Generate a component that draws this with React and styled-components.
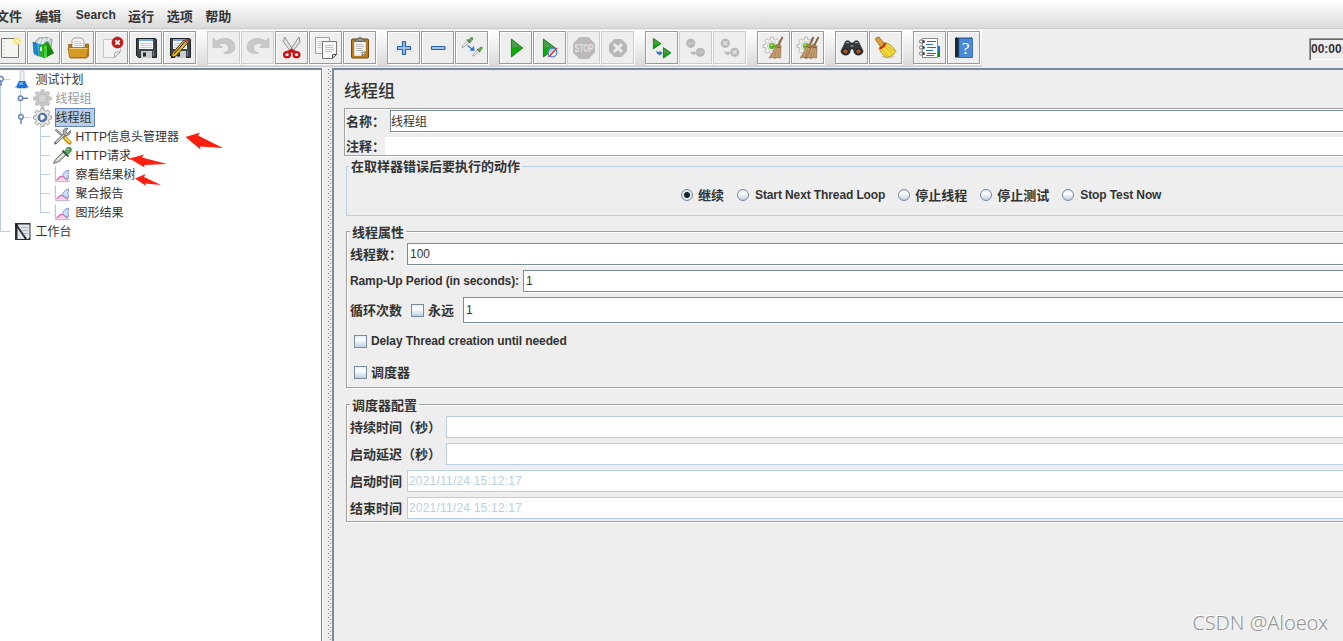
import { useState } from "react";
import styled, { createGlobalStyle, css } from "styled-components";

const c = {
    bg: "#eeeeee",
    text: "#333333",
    dark: "#7a8a99",
    blue: "#b8cfe5",
    handle: "#6382bf",
    etched: "#a0a0a0",
};

//outline of a gear with "n" teeth
function rueda(cx, cy, r1, r2, n = 8) {
    const p = [];
    for (let i = 0; i < n; i++) {
        [[-0.34, r1], [-0.2, r2], [0.2, r2], [0.34, r1]].forEach(([d, r]) => {
            const a = ((i + d) * 2 * Math.PI) / n;
            p.push(`${(cx + r * Math.sin(a)).toFixed(2)} ${(cy - r * Math.cos(a)).toFixed(2)}`);
        });
    }
    return `M${p.join("L")}z`;
}

/* ---------- toolbar drawings, 33px buttons with a 1px border ---------- */

const Broom = ({ x = 0 }) => (
    <g transform={`translate(${x} 0)`}>
        <path d="M25.500 6L20.500 16" stroke="#8a6238" strokeWidth="1.800" />
        <path d="M19 13.500l5 1.500-.5 12-3-.5-2.500 1-2.500-1-3.500.5c3-4 5.500-8.500 7-13.500z" fill="#b48a5c" stroke="#8f6b43" strokeWidth=".6" />
        <path d="M19.500 16l-4 10M21 17l-2 9M22.500 17l-.5 9" stroke="#dbb88a" strokeWidth=".6" />
        <path d="M18.500 15.500l5 1.500" stroke="#7d5426" strokeWidth="1" />
    </g>
);

const GearBody = () => (
    <g>
        <path d={rueda(15, 15, 6.8, 9)} fill="#f1f1f1" stroke="#aaaaaa" strokeWidth=".8" />
        <circle cx="15" cy="15" r="4.500" fill="#e3e6e1" stroke="#bbbbbb" strokeWidth=".7" />
        <circle cx="15" cy="15" r="3" fill="#4fb916" />
        <circle cx="14.500" cy="14" r="1.200" fill="#9aea5c" />
    </g>
);

const Floppy = () => (
    <g>
        <path d="M7.500 7.500h19l1 1v18h-18l-2-2z" fill="#3f464b" stroke="#202427" />
        <path d="M10 8h14v10H10z" fill="#fafcff" />
        <path d="M10 8h14v2H10z" fill="#7ea5d6" />
        <path d="M11 12.500h12M11 14.500h12M11 16.500h12" stroke="#bccfe2" />
        <path d="M12 20h11v7H12z" fill="#c8cccd" />
        <path d="M14 21.500h3v4h-3z" fill="#26292c" />
        <path d="M24.500 20v5" stroke="#758087" />
    </g>
);

const Undo = () => (
    <path
        d="M6 7v9.500h9.500l-3-3c4-2.500 9-.5 9 3.500 0 2-1.500 3.500-5 5 7 2 11.500-1.500 11.500-6C28 8 17 4.500 9.500 10z"
        fill="#c8c8c8"
        stroke="#bebebe"
        strokeWidth=".7"
    />
);

const Tri = ({ x, y, w, h }) => (
    <g>
        <path d={`M${x} ${y}l${w} ${h / 2}l${-w} ${h / 2}z`} fill="#12a80c" stroke="#08700a" strokeWidth=".8" />
        <path d={`M${x + 0.6} ${y + 1.4}l${w * 0.75} ${h * 0.37}l${-w * 0.75} ${h * 0.03}z`} fill="#4c9c4b" />
    </g>
);

const Dropper = ({ x, y, s = 1 }) => (
    <g transform={`translate(${x} ${y}) scale(${s})`}>
        <path d="M0 10L1 8 6 3l1.500 1.500-5.500 5z" fill="#f3f6f1" stroke="#8d978d" strokeWidth=".8" />
        <path d="M5 2l3.500 3.500" stroke="#4b664b" strokeWidth="1.200" />
        <path d="M6.500 2.500L9 0q2-.5 2 1.500L8.500 4.500z" fill="#5fab4a" stroke="#4b8a3b" strokeWidth=".7" />
    </g>
);

const SmallArrow = ({ color }) => <path d="M11.500 19.500l1.500 1.500h1.500v-1.500l3 2.700-3 2.600V23.500H13q-2-1-1.500-4z" fill={color} />;

const icons = {
    nuevo: (
        <g>
            <path d="M8.500 7.500h17v19h-17z" fill="#f4f4f1" stroke="#777872" />
            <path d="M10.500 11h1M10.500 15h1M10.500 19h1M10.500 23h1" stroke="#aaa" />
            <circle cx="24" cy="10" r="3.600" fill="#f7ec84" />
            <path d="M24 6v8M20 10h8" stroke="#f3df46" strokeWidth=".8" />
            <circle cx="24" cy="10" r="1.500" fill="#fffde0" />
        </g>
    ),
    plantillas: (
        <g>
            <path d="M8 11l4-4 8-.5 5 2-1 8-14 2z" fill="#c6d2d5" stroke="#74868d" strokeWidth=".7" />
            <path d="M11 13l3-5M15 13l3-6M20 11l2-4" stroke="#fff" />
            <path d="M6 11l5 2v12l-4-2.500z" fill="#1587c8" stroke="#0b5d94" strokeWidth=".6" />
            <path d="M10 12.500l4 .5v13l-3-1z" fill="#39a6dc" />
            <path d="M12 14l5-1v14l-5-2z" fill="#2cae25" />
            <path d="M16.500 13l4-3 2 3 4.500 9-10.500 5.500z" fill="#1d9518" />
            <path d="M17 14l3 1v12l-3-1z" fill="#47ce35" />
            <path d="M20 15l7 7-7 4z" fill="#158310" />
            <path d="M13 16h2v4h-2z" fill="#d8f8d0" />
        </g>
    ),
    abrir: (
        <g>
            <path d="M11 9l2-2h8l2 3v9H11z" fill="#f8f8f8" stroke="#888" strokeWidth=".8" />
            <path d="M13 10.500h7M13 12.500h8M13 14.500h8" stroke="#bbb" strokeWidth=".8" />
            <path d="M7.500 13.500h3v4h14v-4.500h3v12l-2 2h-16z" fill="#b87a13" stroke="#8f5c08" strokeWidth=".8" />
            <path d="M7 16.500h20.500l-2 10h-17z" fill="#d69a27" stroke="#a56f10" strokeWidth=".8" />
            <path d="M8.500 17.500h17.500" stroke="#f4cc75" />
        </g>
    ),
    cerrar: (
        <g>
            <path d="M8.500 8.500h17v12l-6 6h-11z" fill="#f4f4f4" stroke="#c8c8c8" />
            <path d="M25.500 20.500l-6 6 .5-5z" fill="#fff" stroke="#8c8c8c" strokeWidth=".8" />
            <circle cx="22.500" cy="11.500" r="5.500" fill="#c91818" stroke="#8f0808" strokeWidth=".6" />
            <path d="M20.300 9.300l4.400 4.400m0-4.400l-4.400 4.400" stroke="#fff" strokeWidth="1.900" />
        </g>
    ),
    guardar: <Floppy />,
    guardarComo: (
        <g>
            <Floppy />
            <path d="M8 27l1.500-5L21 9l3.500 3L13 25z" fill="#e9b825" stroke="#37300f" strokeWidth=".9" />
            <path d="M11 23L22 10.500" stroke="#201c10" />
            <path d="M21 9l1.500-1.500L26 10.500 24.500 12z" fill="#d1443a" />
            <path d="M8 27l.8-2.500 1.700 1.500z" fill="#111" />
        </g>
    ),
    deshacer: <Undo />,
    rehacer: (
        <g transform="translate(34 0) scale(-1 1)">
            <Undo />
        </g>
    ),
    cortar: (
        <g>
            <path d="M9.500 6l9.500 14-2.500 1.500L8.500 11zM24 6l-9.500 14 2.500 1.500L25 11z" fill="#e3e4e1" stroke="#858782" strokeWidth=".9" />
            <path d="M14.500 19l2-1.500 2 1.500 3 1-3 2.500-2-1.500-2 1.500-3-2.500z" fill="#c80f0f" />
            <ellipse cx="12" cy="23.700" rx="2.900" ry="2.500" fill="#eee" stroke="#cb1111" strokeWidth="2.300" />
            <ellipse cx="21.500" cy="23.700" rx="2.900" ry="2.500" fill="#eee" stroke="#cb1111" strokeWidth="2.300" />
        </g>
    ),
    copiar: (
        <g>
            <path d="M6.500 6.500h14v16h-14z" fill="#f5f5f5" stroke="#999" strokeWidth=".9" />
            <path d="M9 10.500h9M9 12.500h9M9 14.500h5M9 16.500h5" stroke="#c9c9c9" />
            <path d="M13.500 10.500h14v13l-4 4h-10z" fill="#f9f9f9" stroke="#777" />
            <path d="M16 14.500h9M16 16.500h8M16 18.500h9M16 20.500h7" stroke="#c2c2c2" />
            <path d="M27.500 23.500l-4 4v-4z" fill="#ddd" stroke="#555" />
        </g>
    ),
    pegar: (
        <g>
            <rect x="8.500" y="8" width="17" height="19" rx="1" fill="#b87916" stroke="#76480a" />
            <path d="M11 10h12v12l-3 3h-9z" fill="#f6f6f6" stroke="#ad8a4a" strokeWidth=".5" />
            <path d="M13 13.500h7M13 15.500h8M13 17.500h6M13 19.500h7" stroke="#b9b9b9" />
            <path d="M23 21l-4 4v-4z" fill="#ddd" stroke="#666" strokeWidth=".8" />
            <path d="M11.500 10.500c0-2 2-2 3-2.500.5-2 4.500-2 5 0 1 .5 3 .5 3 2.500z" fill="#8d908a" stroke="#50534d" strokeWidth=".8" />
        </g>
    ),
    mas: (
        <path
            d="M15.500 10.500h3v5h5v3h-5v5h-3v-5h-5v-3h5z"
            fill="#9ec3ea"
            stroke="#2b64a8"
            strokeWidth="1.200"
            strokeLinejoin="round"
        />
    ),
    menos: <rect x="10.500" y="15.500" width="13.500" height="3" rx=".5" fill="#9ec3ea" stroke="#2b64a8" strokeWidth="1.200" />,
    alternar: (
        <g>
            <Dropper x={7} y={6.5} />
            <Dropper x={17.5} y={16} s={0.9} />
            <path d="M12.500 14.500l5 4" stroke="#2d7be0" strokeWidth="1.300" />
            <path d="M19 15l.5 5-5-.5z" fill="#2d7be0" />
        </g>
    ),
    iniciar: <Tri x={12.4} y={8} w={11.4} h={18} />,
    iniciarSinPausa: (
        <g>
            <Tri x={10.4} y={8} w={12} h={18} />
            <circle cx="19.500" cy="21.500" r="4.400" fill="#eee" fillOpacity=".7" stroke="#4d86cf" strokeWidth="1.200" />
            <path d="M15.500 26l8.500-9" stroke="#d92727" strokeWidth="1.300" />
        </g>
    ),
    detener: (
        <g>
            <path d="M12.500 6h9l6.500 6.500v9L21.500 28h-9L6 21.500v-9z" fill="#bababa" />
            <text x="17" y="20.500" textAnchor="middle" textLength="19" lengthAdjust="spacingAndGlyphs" fontSize="10" fontWeight="700" fill="#e2e2e2">
                STOP
            </text>
        </g>
    ),
    apagar: (
        <g>
            <path d="M13.500 8h7l5.500 5.500v7L20.500 26h-7L8 20.500v-7z" fill="#b8b8b8" />
            <path d="M13 13l8 8m0-8l-8 8" stroke="#ececec" strokeWidth="2.800" />
        </g>
    ),
    remotoIniciar: (
        <g>
            <Tri x={8.4} y={7.4} w={7.5} h={10.5} />
            <Tri x={18.4} y={16.6} w={7.5} h={10.5} />
            <SmallArrow color="#3d6fb5" />
        </g>
    ),
    remotoDetener: (
        <g>
            <circle cx="11.700" cy="12.300" r="4.600" fill="#b8b8b8" />
            <path d="M8.500 12.300h6.500" stroke="#c6c6c6" strokeWidth="2" />
            <circle cx="21.300" cy="21.300" r="4.600" fill="#b8b8b8" />
            <path d="M18 21.300h6.500" stroke="#c6c6c6" strokeWidth="2" />
            <SmallArrow color="#bcbcbc" />
        </g>
    ),
    remotoApagar: (
        <g>
            <circle cx="12.300" cy="12.300" r="4.600" fill="#b8b8b8" />
            <path d="M10.300 10.300l4 4m0-4l-4 4" stroke="#e4e4e4" strokeWidth="1.300" />
            <circle cx="21.700" cy="21.300" r="4.600" fill="#b8b8b8" />
            <path d="M19.700 19.300l4 4m0-4l-4 4" stroke="#e4e4e4" strokeWidth="1.300" />
            <SmallArrow color="#bcbcbc" />
        </g>
    ),
    limpiar: (
        <g>
            <GearBody />
            <Broom />
        </g>
    ),
    limpiarTodo: (
        <g>
            <GearBody />
            <Broom x={-3} />
            <Broom x={2} />
        </g>
    ),
    buscar: (
        <g>
            <path d="M10 12c0-3 5-3 5.500 0h3c.5-3 5.500-3 5.500 0l4 8c0 5-8 5.500-9 1l-.5-3h-3L15 21c-1 4.500-9 4-9-1z" fill="#34383a" stroke="#17191a" strokeWidth=".7" />
            <path d="M11 12q2-1 3 0M20 12q2-1 3 0" stroke="#a9b0b3" strokeWidth="1.200" />
            <circle cx="10.500" cy="20.500" r="2.800" fill="#a5552e" stroke="#111" />
            <circle cx="23.500" cy="20.500" r="2.800" fill="#a5552e" stroke="#111" />
            <path d="M15.500 15h3" stroke="#889094" strokeWidth="1.500" />
        </g>
    ),
    limpiarBusqueda: (
        <g>
            <ellipse cx="19" cy="26" rx="7" ry="1.500" fill="#cfcfcf" />
            <path d="M6.500 8.500q0-2.500 3.500-2.500l6 7.500-4 3z" fill="#dda13c" stroke="#92641a" strokeWidth=".8" />
            <path d="M16 11.500q7 2 11 9-3 5-9 6-4-1-8-9z" fill="#f3db3b" stroke="#a98a0b" strokeWidth=".8" />
            <path d="M15 15l8.500 8M12.500 17.500l6.500 8M17 14l8 6" stroke="#c9a916" strokeWidth=".8" />
            <path d="M10.500 17.500q4-1 6-5.500" stroke="#d02a24" strokeWidth="2.200" />
        </g>
    ),
    funciones: (
        <g>
            <path d="M9.500 7.500h15v19h-15z" fill="#fff" stroke="#888" />
            <path d="M26 15v6" stroke="#1575d8" strokeWidth="2" />
            <path d="M26 21v5" stroke="#128a1b" strokeWidth="2" />
            <path d="M14 10.500h9M14 16.500h9M14 22.500h9" stroke="#2a69d0" />
            <path d="M13 13.500h7M13 19.500h7M13 24.500h8" stroke="#2a69d0" />
            {[10.5, 16.5, 22.5].map((y) => (
                <g key={y}>
                    <circle cx="10.500" cy={y} r="1.500" fill="#444" />
                    <circle cx="8" cy={y} r="1.600" fill="#fff" stroke="#666" strokeWidth=".9" />
                </g>
            ))}
        </g>
    ),
    ayuda: (
        <g>
            <path d="M8 7l2-1h15v20.500H8z" fill="#1c2836" />
            <path d="M12 7.500h13.500v19H12z" fill="#4a89d6" stroke="#2864ac" strokeWidth=".8" />
            <path d="M10 6.500h14.500" stroke="#9aa4b2" />
            <text x="18.700" y="22.500" textAnchor="middle" fontSize="17" fill="#fff" fontFamily="Liberation Serif, serif">
                ?
            </text>
        </g>
    ),
};

const grupos = [
    ["nuevo", "plantillas", "abrir", "cerrar", "guardar", "guardarComo"],
    ["deshacer", "rehacer", "cortar", "copiar", "pegar"],
    ["mas", "menos", "alternar"],
    ["iniciar", "iniciarSinPausa", "detener", "apagar"],
    ["remotoIniciar", "remotoDetener", "remotoApagar"],
    ["limpiar", "limpiarTodo"],
    ["buscar", "limpiarBusqueda"],
    ["funciones", "ayuda"],
];

const desactivados = ["deshacer", "rehacer", "detener", "apagar", "remotoDetener", "remotoApagar"];

/* ---------- tree drawings ---------- */

const Gear = ({ off }) => (
    <svg width="20" height="19" viewBox="0 0 20 19">
        <path d={rueda(9.5, 9.5, 6.9, 9.2)} fill={off ? "#c8c8c8" : "#e6e6e6"} stroke={off ? "#c0c0c0" : "#8f8f8f"} strokeWidth=".8" />
        <circle cx="9.500" cy="9.500" r="4.300" fill={off ? "#d3d3d3" : "#5377ab"} stroke={off ? "#bababa" : "#48648f"} strokeWidth="1" />
        {!off && <path d="M7.500 7q3.500-1 4.500 2.500-1.500 2.500-4.500 2.500z" fill="#fff" />}
    </svg>
);

const Flask = () => (
    <svg width="16" height="19" viewBox="0 0 16 19">
        <ellipse cx="8" cy="17" rx="7.500" ry="1.700" fill="#c3c9d0" />
        <path d="M6 1h4v8l3.500 7.500q0 1.500-2 1.500h-7q-2 0-2-1.500L6 9z" fill="#e9eff5" stroke="#bcc6d0" strokeWidth=".8" />
        <path d="M5 11h6l2.500 5.500q0 1.500-2 1.500h-7q-2 0-2-1.500z" fill="#1c6fe0" />
        <path d="M5.500 12h3l1 3H5z" fill="#69aaf7" />
    </svg>
);

const Tools = () => (
    <svg width="20" height="19" viewBox="0 0 20 19">
        <path d="M2.500 2.500L11 10" stroke="#666" strokeWidth="2.200" />
        <path d="M2.500 2.500L11 10" stroke="#ddd" strokeWidth=".8" />
        <path d="M12 11l4.500 4.500" stroke="#c08c12" strokeWidth="4.200" strokeLinecap="round" />
        <path d="M12 10.500l5 5" stroke="#f7d254" strokeWidth="2.200" />
        <path d="M2.500 16L13 6" stroke="#666" strokeWidth="2.800" strokeLinecap="round" />
        <path d="M3 15.500L13 6" stroke="#d9d9d9" strokeWidth="1.200" />
        <path d="M17.500 3.500l-3 3-2-2 2.500-3q-4-1-5 3 1 5 4.500 4 3.500-1 3-5z" fill="#b3b3b3" stroke="#5b5b5b" strokeWidth=".8" />
    </svg>
);

const Pipette = () => (
    <svg width="20" height="19" viewBox="0 0 20 19">
        <path d="M.5 17.500l2.500-4.500 7-7 3 3-7 6.500z" fill="#b5bcb4" stroke="#6b716a" strokeWidth=".9" />
        <path d="M3.500 15l7.500-7" stroke="#f7f7f7" strokeWidth="1.200" />
        <path d="M9.500 4.500l6 6" stroke="#3b5540" strokeWidth="2" />
        <path d="M11.500 5.500l3-4q3.500-1 4 2 0 2.500-4 5z" fill="#51a85d" stroke="#357a42" strokeWidth=".9" />
        <path d="M13.500 4.500l2-1.500" stroke="#a3d6a5" />
    </svg>
);

const Chart = () => (
    <svg width="20" height="19" viewBox="0 0 20 19">
        <path d="M2.500 1.500v15H17" stroke="#c4bccf" fill="none" />
        <path d="M1 4h2M1 8h2M1 12h2M6 18v-2M10 18v-2M14 18v-2" stroke="#c9c3d4" strokeWidth=".8" />
        <path d="M3 16l5-6 7 6z" fill="#f8d4e6" />
        <path d="M3.500 15l4-3.500 3 .5 4.500 3.500" stroke="#dd64ab" strokeWidth="1.200" fill="none" />
        <path d="M9.500 10q2-4.500 6-5-1 5 0 8.500-4 1-6-3.500z" fill="#d4e0fb" stroke="#8098dc" />
    </svg>
);

const Clipboard = () => (
    <svg width="18" height="19" viewBox="0 0 18 19">
        <path d="M1 1h15.500v17H1z" fill="#2c2f33" />
        <path d="M3.500 2.500h12v13l-1.500 1.500H3.500z" fill="#dfe3ea" />
        <path d="M7 5.500h7M8 8.500h6M10 11.500h4" stroke="#a7b4ca" />
        <path d="M2 2.500L12 17" stroke="#111" strokeWidth="1.900" />
        <path d="M3 4l8 11.500" stroke="#888" strokeWidth=".5" />
    </svg>
);

const nodos = [
    { texto: "测试计划", nivel: 0, icono: <Flask />, guia: "raiz" },
    { texto: "线程组", nivel: 1, icono: <Gear off />, guia: "cerrado", off: true },
    { texto: "线程组", nivel: 1, icono: <Gear />, guia: "abierto" },
    { texto: "HTTP信息头管理器", nivel: 2, icono: <Tools />, guia: "hoja" },
    { texto: "HTTP请求", nivel: 2, icono: <Pipette />, guia: "hoja" },
    { texto: "察看结果树", nivel: 2, icono: <Chart />, guia: "hoja" },
    { texto: "聚合报告", nivel: 2, icono: <Chart />, guia: "hoja" },
    { texto: "图形结果", nivel: 2, icono: <Chart />, guia: "ultima" },
    { texto: "工作台", nivel: 0, icono: <Clipboard />, guia: "fin" },
];

const anchoGuia = [14, 33, 53];

function Guia({ tipo, nivel }) {
    const w = anchoGuia[nivel];
    return (
        <svg width={w} height="19" viewBox={`0 0 ${w} 19`} fill="none" stroke={c.blue} shapeRendering="crispEdges">
            <path d={tipo === "raiz" ? "M.5 9v10M0 9.500h10" : tipo === "fin" ? "M.5 0v9.500H10" : "M.5 0v19"} />
            {tipo === "cerrado" && <path d="M20.500 0v19" />}
            {tipo === "abierto" && <path d="M20.500 0v9.500H30" />}
            {tipo === "hoja" && <path d="M40.500 0v19M40.500 9.500H50" />}
            {tipo === "ultima" && <path d="M40.500 0v9.500H50" />}
            <g stroke={c.handle} strokeWidth="1.500" fill="#fff" shapeRendering="auto">
                {tipo === "raiz" && <path d="M1 11v5M1 6.500a2.300 2.300 0 1 1 0 4.600a2.300 2.300 0 1 1 0-4.600" />}
                {tipo === "cerrado" && <path d="M23 9.200h5M20.500 7a2.200 2.200 0 1 1 0 4.400a2.200 2.200 0 1 1 0-4.400" />}
                {tipo === "abierto" && <path d="M21 11v5M21 6.500a2.300 2.300 0 1 1 0 4.600a2.300 2.300 0 1 1 0-4.600" />}
            </g>
        </svg>
    );
}

/* ---------- page ---------- */

const acciones = ["继续", "Start Next Thread Loop", "停止线程", "停止测试", "Stop Test Now"];

const esLatin = (texto) => /^[A-Z]/.test(texto);

export default function App() {
    const [accion, setAccion] = useState("继续");
    const [seleccionado, setSeleccionado] = useState(2);

    return (
        <Ventana>
            <GlobalStyle />
            <Menu>
                {["文件", "编辑", "Search", "运行", "选项", "帮助"].map((m) => (
                    <span key={m}>{m}</span>
                ))}
            </Menu>

            <Barra>
                <Botones>
                    {grupos.map((grupo, i) => (
                        <Grupo key={i}>
                            {grupo.map((b) => (
                                <Boton key={b} disabled={desactivados.includes(b)}>
                                    <svg width="31" height="31" viewBox="1 1 31 31" fill="none">
                                        {icons[b]}
                                    </svg>
                                </Boton>
                            ))}
                        </Grupo>
                    ))}
                </Botones>
                <Reloj>00:00:00</Reloj>
            </Barra>

            <Cuerpo>
                <Arbol>
                    {nodos.map((n, i) => (
                        <Nodo key={i} onClick={() => setSeleccionado(i)}>
                            <Guia tipo={n.guia} nivel={n.nivel} />
                            <IconoNodo $nivel={n.nivel}>{n.icono}</IconoNodo>
                            <Etiqueta $activo={seleccionado === i} $off={n.off}>
                                {n.texto}
                            </Etiqueta>
                        </Nodo>
                    ))}
                    <Flechas width="60" height="70" viewBox="170 120 60 70">
                        <path d="M185.500 137l14.500-4.500-2 3 25 12.500-23-1.500.5 3z" />
                    </Flechas>
                    <Flechas $x={125} $y={78} width="50" height="45" viewBox="125 148 50 45">
                        <path d="M129.500 158.500l14.500-4-2 3 25 6.500-23 1 .5 2.500z" />
                        <path d="M135 178.500l10.500-4.500-1.500 3 17 8-16-1.500 1 2.500z" />
                    </Flechas>
                </Arbol>
                <Divisor>
                    <svg width="5" height="571">
                        <defs>
                            <pattern id="puntos" width="4" height="4" patternUnits="userSpaceOnUse">
                                <path d="M0 0h1v1H0zM2 2h1v1H2z" fill={c.dark} />
                                <path d="M1 1h1v1H1zM3 3h1v1H3z" fill="#fff" />
                            </pattern>
                        </defs>
                        <rect width="4" height="571" fill="url(#puntos)" />
                    </svg>
                </Divisor>

                <Panel>
                    <Titulo>线程组</Titulo>
                    <Datos>
                        <Fila $alto={22}>
                            <Rotulo $ancho={44}>名称：</Rotulo>
                            <Campo $alto={22} $texto={0} $subir={1} defaultValue="线程组" />
                        </Fila>
                        <Fila $alto={18}>
                            <Rotulo $ancho={39}>注释：</Rotulo>
                            <Campo $plano $alto={18} />
                        </Fila>
                    </Datos>

                    <Marco $azul $alto={50} $arriba={10}>
                        <Leyenda $x={2}>在取样器错误后要执行的动作</Leyenda>
                        <Opciones>
                            {acciones.map((a) => (
                                <Opcion key={a} $latin={esLatin(a)} onClick={() => setAccion(a)}>
                                    <Radio $marcado={accion === a} />
                                    <span>{a}</span>
                                </Opcion>
                            ))}
                        </Opciones>
                    </Marco>

                    <Marco $alto={157} $arriba={15}>
                        <Leyenda $bajar={1}>线程属性</Leyenda>
                        <Fila $alto={22} $arriba={2}>
                            <Rotulo $ancho={57}>线程数：</Rotulo>
                            <Campo $alto={22} defaultValue="100" />
                        </Fila>
                        <Fila $alto={22} $arriba={5}>
                            <Rotulo $ancho={173}>Ramp-Up Period (in seconds):</Rotulo>
                            <Campo $alto={22} defaultValue="1" />
                        </Fila>
                        <Fila $alto={26} $arriba={5}>
                            <Rotulo $ancho={61}>循环次数</Rotulo>
                            <Check />
                            <Rotulo $ancho={35}>永远</Rotulo>
                            <Campo $alto={26} defaultValue="1" />
                        </Fila>
                        <Fila $alto={22} $arriba={7} $sangria={4}>
                            <Check />
                            <Rotulo>Delay Thread creation until needed</Rotulo>
                        </Fila>
                        <Fila $alto={22} $arriba={9} $sangria={4}>
                            <Check />
                            <Rotulo>调度器</Rotulo>
                        </Fila>
                    </Marco>

                    <Marco $alto={118} $arriba={16}>
                        <Leyenda $bajar={1}>调度器配置</Leyenda>
                        <Fila $alto={22} $arriba={2}>
                            <Rotulo $ancho={96}>持续时间（秒）</Rotulo>
                            <Campo $claro $alto={22} />
                        </Fila>
                        <Fila $alto={22} $arriba={5}>
                            <Rotulo $ancho={96}>启动延迟（秒）</Rotulo>
                            <Campo $claro $alto={22} />
                        </Fila>
                        <Fila $alto={22} $arriba={5}>
                            <Rotulo $ancho={57}>启动时间</Rotulo>
                            <Campo $claro $alto={22} $texto={1} defaultValue="2021/11/24 15:12:17" />
                        </Fila>
                        <Fila $alto={22} $arriba={5}>
                            <Rotulo $ancho={57}>结束时间</Rotulo>
                            <Campo $claro $alto={22} $texto={1} defaultValue="2021/11/24 15:12:17" />
                        </Fila>
                    </Marco>
                </Panel>
            </Cuerpo>
            <Marca>CSDN @Aloeox</Marca>
        </Ventana>
    );
}

const GlobalStyle = createGlobalStyle`
    * {
        box-sizing: border-box;
    }
    body {
        margin: 0;
        overflow: hidden;
        background: ${c.bg};
    }
    svg {
        display: block;
        flex: none;
    }
`;

const Ventana = styled.div`
    position: relative;
    display: flex;
    flex-direction: column;
    width: 100vw;
    height: 100vh;
    overflow: hidden;
    background: ${c.bg};
    color: ${c.text};
    font-family: "Liberation Sans", "Noto Sans CJK SC", sans-serif;
    font-size: 12px;
    white-space: nowrap;
`;

/* bold labels: chinese glyphs advance 13px, latin ones stay at 12px */
const negrita = css`
    font-weight: 700;
    font-size: ${({ $latin }) => ($latin ? "12px" : "13px")};
    letter-spacing: ${({ $latin }) => ($latin ? "-0.11px" : "0")};
`;

const Menu = styled.nav`
    display: flex;
    align-items: center;
    gap: 12.6px;
    flex: none;
    height: 29px;
    margin-left: -4px;
    padding-top: 2px;
    border-bottom: 1px solid #cccccc;
    background: linear-gradient(#ffffff, #dadada);
    font-size: 13px;
    font-weight: 700;

    span:nth-child(2) {
        margin-left: 0.6px;
    }
    span:nth-child(3) {
        font-size: 12px;
        margin: 0 -0.4px 0 2px;
    }
`;

const Barra = styled.div`
    display: flex;
    justify-content: space-between;
    flex: none;
    height: 39px;
    border-top: 1px solid ${c.bg};
`;

const Botones = styled.div`
    display: flex;
    gap: 10px;
    height: 37px;
    margin-left: -7px;
    padding: 1px 1px 0 0;
    border-bottom: 1px solid #cccccc;
    background: linear-gradient(#ffffff, #dadada);
`;

const Grupo = styled.div`
    display: flex;
`;

const Boton = styled.button`
    width: 33px;
    height: 33px;
    margin-right: 1px;
    padding: 0;
    border: 1px solid ${({ disabled }) => (disabled ? "#cccccc" : "#999999")};
    background: ${c.bg};
    box-shadow: 1px 1px 0 #fff${({ disabled }) => (disabled ? "" : ", inset 1px 1px 0 #fff")};
    font-family: inherit;
`;

const Reloj = styled.div`
    display: flex;
    align-items: center;
    width: 34px;
    height: 22px;
    margin-top: 8px;
    border: 1px solid #999999;
    border-width: 1px 0 0 1px;
    box-shadow: inset 1px 1px 0 #666, inset 0 -1px 0 #fff;
    padding: 0 0 1px 1px;
    font-weight: 700;
    overflow: hidden;
`;

const Cuerpo = styled.div`
    display: flex;
    flex: 1;
    min-height: 0;
`;

const Arbol = styled.div`
    position: relative;
    flex: none;
    width: 322px;
    border-top: 2px solid ${c.dark};
    border-right: 1px solid ${c.dark};
    background: #ffffff;
`;

const Nodo = styled.div`
    display: flex;
    align-items: center;
    height: 19px;
`;

const IconoNodo = styled.div`
    width: ${({ $nivel }) => ($nivel === 0 ? 21 : 22)}px;
`;

const Etiqueta = styled.span`
    height: 19px;
    padding: 1px 2px 0 0;
    line-height: 17px;
    border: 1px solid ${({ $activo }) => ($activo ? c.handle : "transparent")};
    text-indent: -0.4px;
    background: ${({ $activo }) => ($activo ? c.blue : "transparent")};
    color: ${({ $off }) => ($off ? "#999999" : c.text)};
`;

const Flechas = styled.svg`
    position: absolute;
    left: ${({ $x = 170 }) => $x}px;
    top: ${({ $y = 50 }) => $y}px;
    fill: #fb1f10;
    pointer-events: none;
`;

const Divisor = styled.div`
    width: 10px;
    flex: none;
    padding: 1px 0 0 5px;
    border-left: 1px solid #fff;
`;

const Panel = styled.main`
    display: flex;
    flex-direction: column;
    flex: 1;
    min-width: 0;
    padding-left: 10px;
    border-top: 2px solid ${c.dark};
    border-left: 2px solid ${c.dark};
    overflow: hidden;
`;

const Titulo = styled.h1`
    margin: 0;
    height: 38px;
    padding-top: 9px;
    font-size: 17px;
    line-height: 25px;
    font-weight: 500;
`;

const marcado = css`
    border: 1px solid ${c.etched};
    border-right: 0;
    box-shadow: inset 1px 1px 0 #fff, 0 1px 0 #fff;
`;

const Datos = styled.section`
    height: 48px;
    padding: 1px 0 0 1px;
    display: flex;
    flex-direction: column;
    gap: 5px;
    ${marcado}
`;

const Marco = styled.section`
    height: ${({ $alto }) => $alto}px;
    margin: ${({ $arriba }) => $arriba}px 0 0 2px;
    padding-left: 3px;
    ${marcado}
    ${({ $azul }) =>
        $azul &&
        css`
            border-color: ${c.blue};
            box-shadow: none;
        `}
`;

const Leyenda = styled.div`
    width: fit-content;
    height: 18px;
    margin: -9px 0 0 ${({ $x = 3 }) => $x - 3}px;
    padding: ${({ $bajar = 0 }) => $bajar}px 2px 0;
    line-height: 18px;
    background: ${c.bg};
    ${negrita}
`;

const Fila = styled.div`
    display: flex;
    align-items: center;
    flex: none;
    height: ${({ $alto }) => $alto}px;
    margin-top: ${({ $arriba = 0 }) => $arriba}px;
    padding-left: ${({ $sangria = 0 }) => $sangria}px;
`;

const Rotulo = styled.label.attrs(({ children }) => ({ $latin: esLatin(children) }))`
    flex: none;
    width: ${({ $ancho }) => ($ancho ? `${$ancho}px` : "auto")};
    padding-bottom: ${({ $latin }) => ($latin ? 0 : 2)}px;
    ${negrita}
`;

const Campo = styled.input`
    flex: 1;
    min-width: 0;
    height: ${({ $alto }) => $alto}px;
    padding: 0 0 ${({ $subir = 0 }) => $subir}px ${({ $texto = 2 }) => $texto}px;
    border: 1px solid ${({ $claro }) => ($claro ? c.blue : c.dark)};
    border-right: 0;
    border-radius: 0;
    outline: none;
    background: #ffffff;
    box-shadow: ${({ $claro }) => ($claro ? "none" : "0 1px 0 #fff")};
    color: ${({ $claro }) => ($claro ? c.blue : c.text)};
    font: inherit;
    letter-spacing: ${({ $claro }) => ($claro ? "0.2px" : "0")};
    ${({ $plano }) =>
        $plano &&
        css`
            border: 0;
            box-shadow: none;
        `}
`;

const Check = styled.span`
    flex: none;
    width: 13px;
    height: 13px;
    margin: 1px 4px 0 0;
    border: 1px solid ${c.dark};
    background: linear-gradient(#e3edf7, #ffffff 35%, #b8cfe5);
`;

const Opciones = styled.div`
    display: flex;
    gap: 13px;
    padding: 9px 0 0 331px;
`;

const Opcion = styled.div`
    display: flex;
    align-items: center;
    gap: ${({ $latin }) => ($latin ? 6 : 5)}px;
    height: 20px;
    cursor: default;
    ${negrita}

    span {
        padding-bottom: ${({ $latin }) => ($latin ? 0 : 1)}px;
    }
`;

const Radio = styled.i`
    flex: none;
    width: 12px;
    height: 12px;
    border: 1px solid ${c.dark};
    border-radius: 50%;
    background: ${({ $marcado }) =>
        $marcado
            ? "radial-gradient(circle, #222 0 2.700px, #dce8f3 3.300px)"
            : "linear-gradient(#dde8f3, #ffffff 35%, #b8cfe5)"};
`;

const Marca = styled.div`
    position: absolute;
    right: 15px;
    bottom: 5px;
    font-family: "Noto Sans", sans-serif;
    font-size: 20px;
    font-weight: 300;
    letter-spacing: -0.05px;
    color: #959595;
    text-shadow: -1px -1px 0 #fff;
`;
